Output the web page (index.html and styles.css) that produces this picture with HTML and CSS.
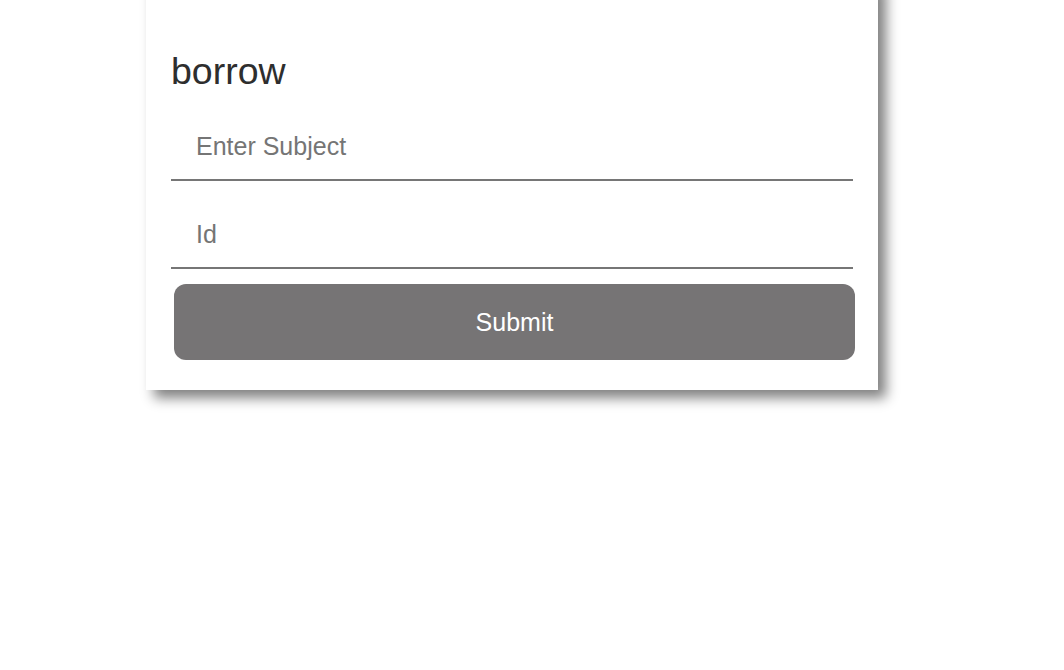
FILE: index.html
```html
<!DOCTYPE html>
<html lang="en">
<head>
<meta charset="utf-8">
<title>borrow</title>
<link rel="stylesheet" href="styles.css">
</head>
<body>
<div class="page">
  <form class="card">
    <h1 class="title">borrow</h1>
    <input class="field" type="text" placeholder="Enter Subject">
    <input class="field" type="text" placeholder="Id">
    <button class="submit" type="button">Submit</button>
  </form>
</div>
</body>
</html>
```
FILE: styles.css
```css
html, body {
  margin: 0;
  padding: 0;
  background: #ffffff;
  font-family: "Liberation Sans", Arial, sans-serif;
}

body {
  min-height: 100vh;
}

.page {
  padding: 0 0 60px 146px;
  display: flex;
  align-items: flex-start;
}

.card {
  width: 732px;
  box-sizing: border-box;
  margin-top: -20px;
  padding: 70px 25px 30px 25px;
  background: #ffffff;
  box-shadow: 8px 8px 12px #808080;
  display: flex;
  flex-direction: column;
  gap: 30px;
}

.title {
  margin: 0;
  font-size: 37.5px;
  font-weight: normal;
  line-height: 43px;
  color: #2e2e2e;
}

.field {
  display: block;
  width: 100%;
  height: 58px;
  box-sizing: border-box;
  margin: 0;
  padding: 0 25px 10px 25px;
  border: none;
  border-bottom: 2px solid #767676;
  outline: none;
  background: transparent;
  font-family: "Liberation Sans", Arial, sans-serif;
  font-size: 25px;
  color: #333333;
}

.field::placeholder {
  color: #757575;
  opacity: 1;
}

.submit {
  margin: -15px -2px 0 3px;
  height: 76px;
  border: none;
  border-radius: 12px;
  background: #767475;
  color: #ffffff;
  font-family: "Liberation Sans", Arial, sans-serif;
  font-size: 25px;
  cursor: pointer;
}
```
